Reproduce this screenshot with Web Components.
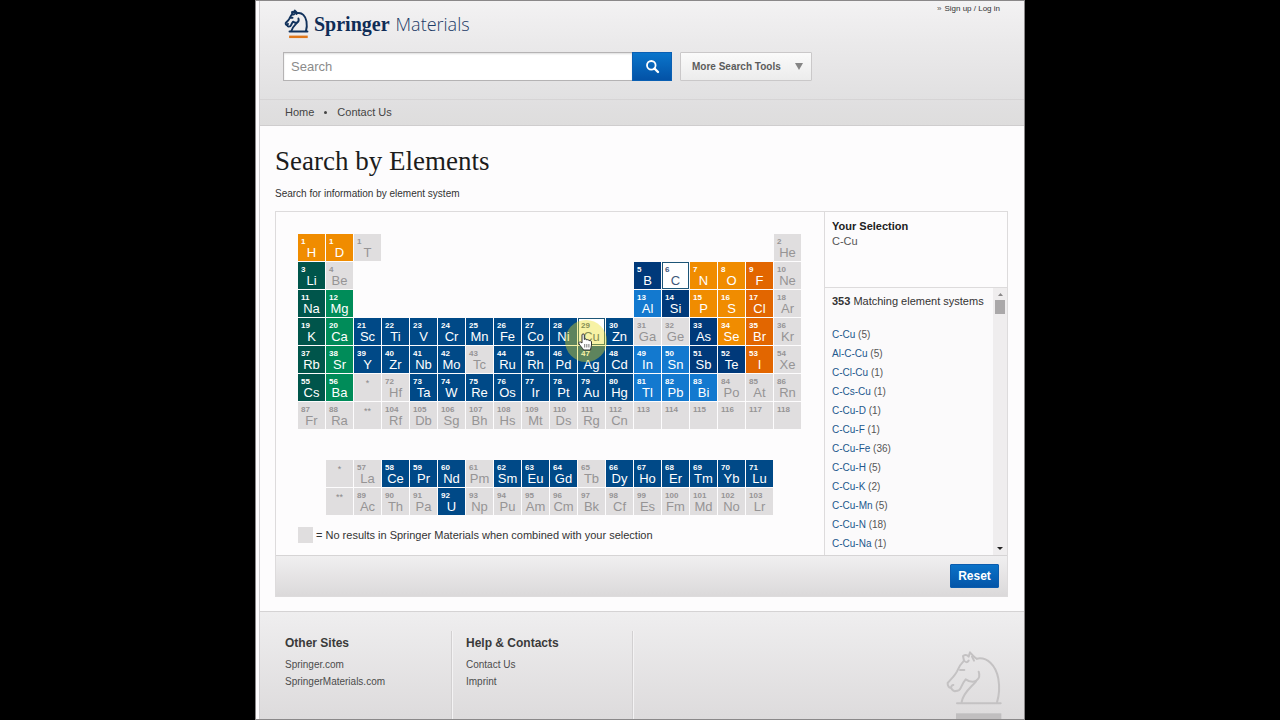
<!DOCTYPE html>
<html lang="en">
<head>
<meta charset="utf-8">
<title>Search by Elements - Springer Materials</title>
<style>
  html, body { margin: 0; background: #000; }
  body { font-family: "Liberation Sans", Arial, sans-serif; font-size: 11px; color: #333; }
</style>
</head>
<body>
<sm-page>
  <sm-header slot="header"></sm-header>
  <sm-element-search></sm-element-search>
  <sm-footer slot="footer"></sm-footer>
</sm-page>

<script>
function define(name, html, setup) {
  const template = document.createElement('template');
  template.innerHTML = html;
  customElements.define(name, class extends HTMLElement {
    constructor() {
      super();
      this.attachShadow({ mode: 'open' }).append(template.content.cloneNode(true));
    }
    connectedCallback() {
      if (setup && !this.ready) { this.ready = true; setup(this, this.shadowRoot); }
    }
  });
}

/* Knight emblem; colours and weight come from custom properties. */
define('sm-knight', `
<style>
  :host { display: block; }
  svg { display: block; width: 100%; height: auto; overflow: visible; }
  .line { fill: none; stroke: var(--knight-line, #c4c2c3); stroke-width: var(--knight-weight, 6); stroke-linejoin: round; stroke-linecap: round; }
  .bar { fill: var(--knight-bar, #c0bebf); }
</style>
<svg viewBox="138 155 168 205" aria-hidden="true">
  <path class="line" d="M230 178C262 172 288 198 295 238C299 262 297 290 291 309"/>
  <path class="line" d="M230 178C224 176 218 168 210 159L206 172C201 166 196 165 189 170L192 184C182 194 176 204 171 216C164 230 152 240 143 251C142 260 148 266 153 265C156 272 161 277 167 275C173 275 180 272 182 266C186 258 190 248 197 240C206 246 220 250 229 244C238 238 240 228 236 217"/>
  <path class="line" d="M228 246C216 262 190 278 185 308M192 184C198 190 202 190 206 184M180 212L193 212M153 265C154 260 157 256 160 257M216 172L222 184"/>
  <path class="line" d="M171 312H302"/>
  <rect class="bar" x="168" y="342" width="136" height="18"/>
</svg>`);

define('sm-header', `
<style>
  :host { display: block; background: linear-gradient(#f3f2f3 0, #ebeaeb 40px, #e0dfe0 105px, #dedddd 100%); border-bottom: 1px solid #cfcdce; }
  .top { display: flex; justify-content: space-between; align-items: flex-start; padding: 9px 24px 0; }
  .logo { display: flex; text-decoration: none; color: #0f2c56; gap: 6px; margin-left: 1px; }
  .logo sm-knight { width: 23px; --knight-line: #12325c; --knight-weight: 14; --knight-bar: #e0771a; }
  .name { display: flex; align-items: baseline; gap: 6px; line-height: 28px; }
  .name b { font: 700 20px/28px "Liberation Serif", serif; }
  .name span { font: 300 18px/28px "Open Sans", "Noto Sans", sans-serif; color: #1b3a66; }
  .login { display: flex; font-size: 8px; line-height: 12px; gap: 3px; margin-top: -7px; color: #555; }
  .login a { color: #333; text-decoration: none; }
  form { display: flex; padding: 14px 23px 0; margin: 0; }
  input { box-sizing: border-box; flex: 0 1 349px; min-width: 0; height: 29px; border: 1px solid #b5b3b4; border-right: 0; padding: 0 7px; background: #fff; box-shadow: inset 0 1px 2px #ddd; font: 13px "Liberation Sans", sans-serif; }
  input::placeholder { color: #8b8b8b; opacity: 1; }
  button { font-family: inherit; margin: 0; cursor: pointer; }
  .go { width: 40px; height: 29px; padding: 0; border: 1px solid #0a5fb3; background: linear-gradient(#0a75cb, #0352a6); display: grid; place-items: center; }
  .more { display: flex; align-items: center; justify-content: space-between; width: 132px; height: 29px; margin-left: 8px; padding: 0 8px 0 11px; border: 1px solid #cac8c9; background: linear-gradient(#fafafa, #ececec); font-size: 10px; font-weight: 700; color: #5c5c5c; border-radius: 1px; }
  nav { display: flex; align-items: center; gap: 10px; margin-top: 18px; padding: 0 25px; height: 25px; border-top: 1px solid #d6d4d5; }
  nav a { color: #444; text-decoration: none; line-height: 13px; }
  nav i { width: 3px; height: 3px; border-radius: 2px; background: #444; }
</style>
<header>
  <div class="top">
    <a class="logo" href="#"><sm-knight></sm-knight><span class="name"><b>Springer</b><span>Materials</span></span></a>
    <div class="login"><span>»</span><a href="#">Sign up / Log in</a></div>
  </div>
  <form onsubmit="return false">
    <input type="text" placeholder="Search" aria-label="Search">
    <button class="go" aria-label="Search"><svg width="15" height="15" viewBox="0 0 15 15" fill="none" stroke="#fff"><circle cx="6.300" cy="6.300" r="4.300" stroke-width="1.800"/><path d="M9.500 9.500L13 13" stroke-width="2.400" stroke-linecap="round"/></svg></button>
    <button class="more" type="button" aria-haspopup="true">More Search Tools<svg width="8" height="7" viewBox="0 0 8 7"><path d="M0 0H8L4 7Z" fill="#858585"/></svg></button>
  </form>
  <nav aria-label="Main"><a href="#">Home</a><i></i><a href="#">Contact Us</a></nav>
</header>`);

/* One square of the periodic table. */
define('sm-element', `
<style>
  :host { display: block; position: relative; }
  button { display: flex; flex-direction: column; box-sizing: border-box; width: 100%; height: 27px; margin: 0; padding: 4px 0 0 3px; border: 0; border-radius: 0; background: #e0dedf; color: #969495; font-family: inherit; text-align: left; cursor: pointer; }
  .n { font-size: 8px; line-height: 8px; height: 8px; font-weight: 700; }
  .s { font-size: 13px; line-height: 13px; align-self: center; margin-right: 3px; }
  :host([kind]) button { color: #fff; }
  :host([kind="o"]) button { background: #f08c00; }
  :host([kind="h"]) button { background: #e26600; }
  :host([kind="k"]) button { background: #00554b; }
  :host([kind="g"]) button { background: #008c59; }
  :host([kind="b"]) button { background: #004987; }
  :host([kind="n"]) button { background: #00397a; }
  :host([kind="l"]) button { background: #1379cf; }
  :host([kind="w"]) button { background: #fff; color: #3f587a; outline: 1px solid #1d5577; outline-offset: -1px; }
</style>
<button type="button"><span class="n"></span><span class="s"></span></button>
<slot></slot>`, (el, root) => {
  root.querySelector('.n').textContent = el.getAttribute('number');
  root.querySelector('.s').textContent = el.getAttribute('symbol');
});

define('sm-pointer', `
<style>
  :host { display: block; position: absolute; left: -13px; top: 2px; width: 42px; height: 42px; border-radius: 50%; background: rgba(236, 222, 30, .4); z-index: 2; pointer-events: none; }
  svg { position: absolute; left: 13px; top: 13px; }
</style>
<svg width="15" height="18" viewBox="0 0 15 18" aria-hidden="true"><path d="M4 10V2C4 .5 6.300.5 6.300 2V6.500C7 5.700 8.600 5.900 8.700 7C9.600 6.300 11 6.700 11.100 7.700C12 7.200 13.500 7.700 13.500 9V12C13.500 14 12.500 15 12.500 17H5.500C5 15.300 1.500 12.500.8 10.300C.5 9.200 2 8.300 3 9.300Z" fill="#fff" stroke="#333" stroke-width="1"/><path d="M6.700 11V14.500M8.800 11V14.500M10.900 11V14.500" stroke="#555" stroke-width=".8"/></svg>`);

/* Cells read "number symbol kind"; "_" is an empty place, "-" a missing part. */
const MAIN = [
  '1 H o,1 D o,1 T,_,_,_,_,_,_,_,_,_,_,_,_,_,_,2 He',
  '3 Li k,4 Be,_,_,_,_,_,_,_,_,_,_,5 B n,6 C w,7 N o,8 O o,9 F h,10 Ne',
  '11 Na k,12 Mg g,_,_,_,_,_,_,_,_,_,_,13 Al l,14 Si n,15 P o,16 S o,17 Cl h,18 Ar',
  '19 K k,20 Ca g,21 Sc b,22 Ti b,23 V b,24 Cr b,25 Mn b,26 Fe b,27 Co b,28 Ni b,29 Cu w,30 Zn b,31 Ga,32 Ge,33 As n,34 Se o,35 Br h,36 Kr',
  '37 Rb k,38 Sr g,39 Y b,40 Zr b,41 Nb b,42 Mo b,43 Tc,44 Ru b,45 Rh b,46 Pd b,47 Ag b,48 Cd b,49 In l,50 Sn l,51 Sb n,52 Te n,53 I h,54 Xe',
  '55 Cs k,56 Ba g,* -,72 Hf,73 Ta b,74 W b,75 Re b,76 Os b,77 Ir b,78 Pt b,79 Au b,80 Hg b,81 Tl l,82 Pb l,83 Bi l,84 Po,85 At,86 Rn',
  '87 Fr,88 Ra,** -,104 Rf,105 Db,106 Sg,107 Bh,108 Hs,109 Mt,110 Ds,111 Rg,112 Cn,113 -,114 -,115 -,116 -,117 -,118 -'
];
const SERIES = [
  '_,* -,57 La,58 Ce b,59 Pr b,60 Nd b,61 Pm,62 Sm b,63 Eu b,64 Gd b,65 Tb,66 Dy b,67 Ho b,68 Er b,69 Tm b,70 Yb b,71 Lu b,_',
  '_,** -,89 Ac,90 Th,91 Pa,92 U b,93 Np,94 Pu,95 Am,96 Cm,97 Bk,98 Cf,99 Es,100 Fm,101 Md,102 No,103 Lr,_'
];

define('sm-periodic-table', `
<style>
  :host { display: block; }
  table { border-collapse: separate; border-spacing: 1px; table-layout: fixed; width: 505px; margin: 0; }
  td { padding: 0; height: 27px; }
  .gap td { height: 29px; }
</style>
<table aria-label="Periodic table"><tbody></tbody></table>`, (el, root) => {
  const body = root.querySelector('tbody');
  const addRow = line => {
    const tr = body.insertRow();
    for (const item of line.split(',')) {
      const td = tr.insertCell();
      if (item === '_') continue;
      const [number, symbol, kind] = item.split(' ');
      const cell = document.createElement('sm-element');
      cell.setAttribute('number', /\*/.test(number) ? '' : number);
      cell.setAttribute('symbol', symbol === '-' ? '' : symbol);
      if (kind) cell.setAttribute('kind', kind);
      if (/\*/.test(number)) {
        const mark = document.createElement('sm-series-mark');
        mark.textContent = number;
        cell.append(mark);
      }
      if (symbol === 'Cu') cell.append(document.createElement('sm-pointer'));
      td.append(cell);
    }
  };
  MAIN.forEach(addRow);
  const gap = body.insertRow();
  gap.className = 'gap';
  gap.insertCell().colSpan = 18;
  SERIES.forEach(addRow);
});

define('sm-series-mark', `
<style>:host { display: block; position: absolute; inset: 4px 0 auto 0; text-align: center; font-size: 9px; line-height: 10px; color: #8c8a8b; }</style>
<slot></slot>`);

define('sm-results', `
<style>
  :host { display: flex; flex-direction: column; border-left: 1px solid #dddbdc; }
  .selection { box-sizing: border-box; height: 76px; padding: 7px; border-bottom: 1px solid #dddbdc; }
  h2 { margin: 0; font-size: 11px; line-height: 15px; color: #222; }
  p { margin: 0; line-height: 15px; color: #555; }
  .matches { display: flex; flex: 1; background: #fbfafb; }
  .list { flex: 1; padding: 6px 0 0 7px; white-space: nowrap; }
  .list p { color: #333; }
  ul { list-style: none; margin: 16px 0 0; padding: 0; }
  li { font-size: 10px; line-height: 19px; height: 19px; color: #555; }
  a { color: #21578d; text-decoration: none; }
  .bar { display: flex; flex-direction: column; align-items: center; width: 14px; background: #efedee; }
  .thumb { width: 10px; height: 14px; margin-top: 4px; background: #aaa8a9; }
  .up { margin-top: 5px; }
  .down { margin: auto 0 5px; }
</style>
<section class="selection"><h2>Your Selection</h2><p>C-Cu</p></section>
<section class="matches">
  <div class="list"><p><b>353</b> Matching element systems</p><ul></ul></div>
  <div class="bar" aria-hidden="true">
    <svg class="up" width="5" height="3" viewBox="0 0 5 3"><path d="M0 3H5L2.500 0Z" fill="#8a8889"/></svg>
    <div class="thumb"></div>
    <svg class="down" width="6" height="3" viewBox="0 0 6 3"><path d="M0 0H6L3 3Z" fill="#222"/></svg>
  </div>
</section>`, (el, root) => {
  const ul = root.querySelector('ul');
  for (const [name, count] of [['C-Cu', 5], ['Al-C-Cu', 5], ['C-Cl-Cu', 1], ['C-Cs-Cu', 1], ['C-Cu-D', 1], ['C-Cu-F', 1], ['C-Cu-Fe', 36], ['C-Cu-H', 5], ['C-Cu-K', 2], ['C-Cu-Mn', 5], ['C-Cu-N', 18], ['C-Cu-Na', 1]]) {
    const li = document.createElement('li');
    const a = document.createElement('a');
    a.href = '#';
    a.textContent = name;
    li.append(a, ` (${count})`);
    ul.append(li);
  }
});

define('sm-element-search', `
<style>
  :host { display: block; padding: 19px 16px 14px 15px; }
  h1 { margin: 0; font: 400 27px/32px "Liberation Serif", serif; color: #1c1c1c; }
  .lead { margin: 10px 0 0; font-size: 10px; line-height: 14px; color: #333; }
  .panel { margin-top: 10px; border: 1px solid #dddbdc; }
  .body { display: flex; }
  .chart { flex: 1; padding: 21px 21px 0; }
  .legend { display: flex; align-items: center; gap: 3px; margin: 11px 0 12px 1px; line-height: 16px; }
  .legend i { width: 15px; height: 16px; background: #e0dedf; }
  sm-results { flex: 0 0 182px; }
  .actions { display: flex; justify-content: flex-end; padding: 8px; border-top: 1px solid #d6d4d5; background: linear-gradient(#f0eff0, #dbd9da); }
  .actions button { width: 49px; height: 24px; padding: 0; border: 1px solid #0a5cae; border-radius: 1px; background: linear-gradient(#0a72c8, #0455a8); color: #fff; font: 700 12px "Liberation Sans", sans-serif; cursor: pointer; }
</style>
<main>
  <h1>Search by Elements</h1>
  <p class="lead">Search for information by element system</p>
  <div class="panel">
    <div class="body">
      <div class="chart">
        <sm-periodic-table></sm-periodic-table>
        <div class="legend"><i></i>= No results in Springer Materials when combined with your selection</div>
      </div>
      <sm-results></sm-results>
    </div>
    <div class="actions"><button type="button">Reset</button></div>
  </div>
</main>`);

define('sm-link-group', `
<style>
  :host { display: block; padding: 4px 14px 0; border-right: 1px solid #d2d0d1; box-shadow: 1px 0 0 #f4f3f4; box-sizing: border-box; }
  h2 { margin: 0 0 5px; font-size: 12px; line-height: 16px; color: #3a3a3a; }
  ::slotted(a) { display: block; font-size: 10px; line-height: 17px; color: #4c4c4c; text-decoration: none; }
</style>
<h2></h2><slot></slot>`, (el, root) => { root.querySelector('h2').textContent = el.getAttribute('heading'); });

define('sm-footer', `
<style>
  :host { display: flex; flex: 1; border-top: 1px solid #d5d3d4; background: linear-gradient(#efeeef, #dddbdc); }
  footer { display: flex; flex: 1; padding: 19px 22px 0 11px; overflow: hidden; }
  sm-link-group { flex: 0 0 181px; }
  sm-knight { width: 56px; margin: 20px 0 -8px auto; }
</style>
<footer>
  <sm-link-group heading="Other Sites"><a href="#">Springer.com</a><a href="#">SpringerMaterials.com</a></sm-link-group>
  <sm-link-group heading="Help &amp; Contacts"><a href="#">Contact Us</a><a href="#">Imprint</a></sm-link-group>
  <sm-knight></sm-knight>
</footer>`);

define('sm-page', `
<style>
  :host { display: flex; flex-direction: column; box-sizing: border-box; max-width: 770px; min-height: 100vh; margin: 0 auto; border: 1px solid #8a8889; background: #fdfcfd; }
  .sheet { display: flex; flex-direction: column; flex: 1; margin-left: 3px; border-left: 1px solid #d0ced0; }
</style>
<div class="sheet"><slot name="header"></slot><slot></slot><slot name="footer"></slot></div>`);
</script>
</body>
</html>
